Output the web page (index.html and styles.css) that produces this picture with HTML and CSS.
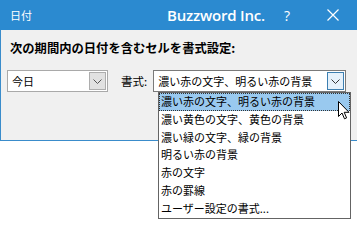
FILE: index.html
```html
<!DOCTYPE html>
<html lang="ja">
  <head>
    <meta charset="UTF-8" />
    <meta name="viewport" content="width=device-width, initial-scale=1.0" />
    <title>日付</title>
    <link rel="stylesheet" href="styles.css">
  </head>

  <body>
    <div class="window">
      <header class="titlebar">
        <span class="title">日付</span>
        <span class="brand">Buzzword Inc.</span>
        <span class="help">?</span>
        <span class="close">
          <svg width="12" height="12" viewBox="0 0 12 12">
            <path d="M0.5 0.5 L11.5 11.5 M11.5 0.5 L0.5 11.5" stroke="#fff" stroke-width="1.2" fill="none" />
          </svg>
        </span>
      </header>

      <main class="dialog">
        <p class="heading">次の期間内の日付を含むセルを書式設定:</p>
        <div class="row">
          <div class="combo combo-period">
            <span class="value">今日</span>
            <span class="drop">
              <svg width="9" height="5" viewBox="0 0 9 5"><path d="M0.5 0.5 L4.5 4.5 L8.5 0.5" stroke="#555" fill="none" /></svg>
            </span>
          </div>
          <span class="label">書式:</span>
          <div class="combo combo-format">
            <span class="value">濃い赤の文字、明るい赤の背景</span>
            <span class="drop active">
              <svg width="9" height="5" viewBox="0 0 9 5"><path d="M0.5 0.5 L4.5 4.5 L8.5 0.5" stroke="#333" fill="none" /></svg>
            </span>
          </div>
        </div>
      </main>
    </div>

    <!-- 開いているドロップダウンの一覧 -->
    <ul class="list">
      <li class="selected">濃い赤の文字、明るい赤の背景</li>
      <li>濃い黄色の文字、黄色の背景</li>
      <li>濃い緑の文字、緑の背景</li>
      <li>明るい赤の背景</li>
      <li>赤の文字</li>
      <li>赤の罫線</li>
      <li>ユーザー設定の書式...</li>
    </ul>

    <svg class="cursor" width="12" height="19" viewBox="0 0 12 19">
      <path d="M0.5 0.5 L0.5 15.5 L4 12 L6.5 17.8 L8.6 16.9 L6.2 11.3 L11 11.3 Z" fill="#fff" stroke="#000" stroke-width="1" stroke-linejoin="miter" />
    </svg>
  </body>
</html>
```

FILE: styles.css
```css
body {
  margin: 0;
  background-color: #fff;
  font-family: "Noto Sans CJK JP", "Noto Sans", sans-serif;
  color: #000;
}

.window {
  width: 356px;
  border: 1px solid #3a8ccb;
  border-top: none;
}

.titlebar {
  height: 30px;
  background-color: #2b8ad0;
  color: #fff;
  display: flex;
  align-items: center;
  margin: 0 -1px;
}

.title {
  font-size: 11px;
  margin-left: 10px;
  flex: 1;
}

.brand {
  font-family: "Open Sans", sans-serif;
  font-weight: 600;
  font-size: 15px;
  letter-spacing: -0.2px;
}

.help {
  font-family: "Open Sans", sans-serif;
  font-size: 14px;
  margin-left: 19px;
}

.close {
  display: flex;
  margin-left: 37px;
  margin-right: 19px;
}

.dialog {
  background-color: #f0f0f0;
  height: 110px;
  padding: 0 6px;
  box-sizing: border-box;
  padding-top: 10px;
}

.heading {
  margin: 0 0 14px 3px;
  font-size: 12.3px;
  font-weight: bold;
  line-height: 16px;
}

.row {
  display: flex;
  align-items: center;
}

.combo {
  height: 22px;
  box-sizing: border-box;
  border: 1px solid #a9a9a9;
  background-color: #fff;
  display: flex;
  align-items: center;
  font-size: 11px;
}

.combo-period {
  width: 101px;
}

.combo-format {
  width: 193px;
  border-color: #7a7a7a;
}

.value {
  flex: 1;
  padding-left: 4px;
  white-space: nowrap;
}

.drop {
  width: 17px;
  height: 18px;
  margin-right: 1px;
  box-sizing: border-box;
  border: 1px solid #adadad;
  background-color: #e1e1e1;
  display: flex;
  align-items: center;
  justify-content: center;
}

.drop.active {
  border-color: #3c7fb1;
  background-color: #e5f1fb;
}

.label {
  font-size: 11.5px;
  margin-left: 13px;
  margin-right: 6px;
}

.list {
  position: absolute;
  left: 158px;
  top: 92px;
  width: 193px;
  height: 127px;
  margin: 0;
  padding: 0;
  box-sizing: border-box;
  border: 1px solid #646464;
  background-color: #fff;
  list-style: none;
  font-size: 11px;
}

.list li {
  height: 17.8px;
  line-height: 17.8px;
  padding-left: 2px;
  box-sizing: border-box;
  white-space: nowrap;
}

.list li.selected {
  background-color: #99c9ef;
  outline: 1px dotted #333;
  outline-offset: -1px;
}

.cursor {
  position: absolute;
  left: 338px;
  top: 101px;
}
```
